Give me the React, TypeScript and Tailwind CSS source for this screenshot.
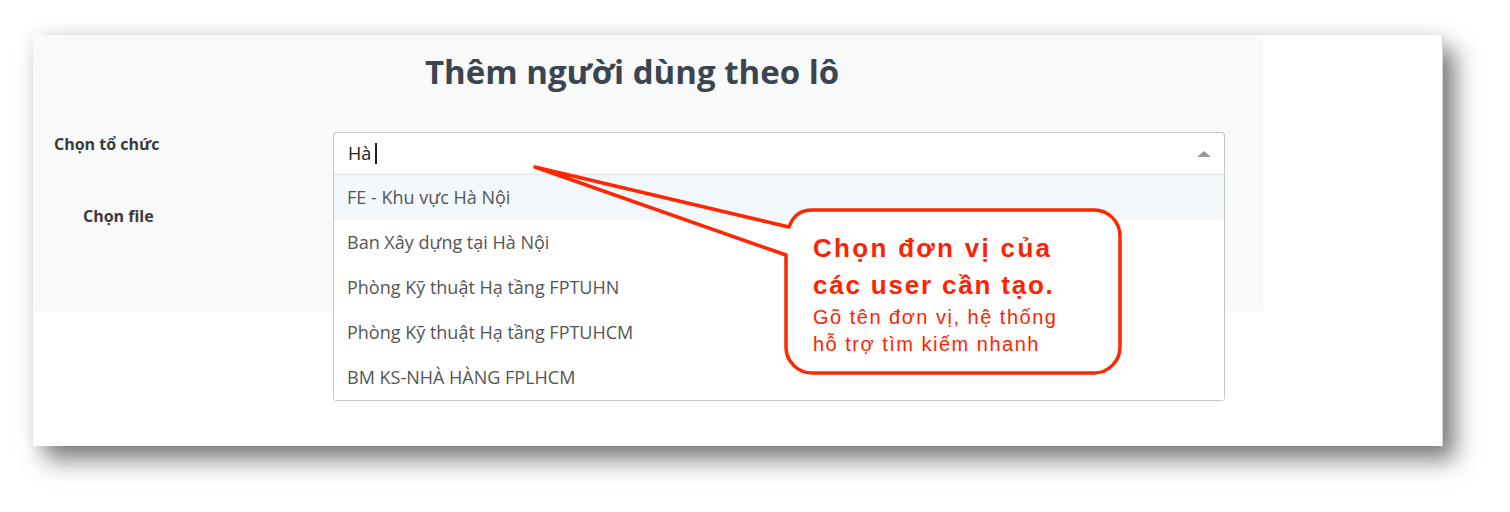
import React from "react";

const items = [
  "FE - Khu vực Hà Nội",
  "Ban Xây dựng tại Hà Nội",
  "Phòng Kỹ thuật Hạ tầng FPTUHN",
  "Phòng Kỹ thuật Hạ tầng FPTUHCM",
  "BM KS-NHÀ HÀNG FPLHCM",
];

export default function App() {
  return (
    <div className="relative w-[1510px] h-[512px] bg-white pt-[35px] pl-[33px] overflow-hidden font-['Open_Sans',sans-serif]">
      <div className="w-[1410px] h-[411px] bg-white shadow-[12px_14px_22px_rgba(0,0,0,0.5),0_-2px_16px_rgba(0,0,0,0.08)] border-r border-[#d8d8d8]">
        <div className="w-[1230px] h-[276px] bg-[#f8f9f9]">
          <div className="pt-[17px] pl-[392px] h-[58px]">
            <h1 className="text-[33px] leading-[40px] font-bold text-[#3b4550]">Thêm người dùng theo lô</h1>
          </div>
          <div className="mt-[39px] flex">
            <div className="w-[300px] pl-[21px]">
              <span className="text-[16px] leading-[20px] font-bold text-[#3a3a3a]">Chọn tổ chức</span>
            </div>
            <div className="relative w-[892px]">
              <div className="h-[43px] bg-white border-t border-x border-[#c6c6c6] rounded-t-[4px] border-b border-b-[#e4e4e4] flex items-center justify-between pl-[14px] pr-[13px]">
                <div className="flex items-center">
                  <span className="text-[18px] text-[#222]">Hà</span>
                  <span className="ml-[4px] w-[2px] h-[21px] bg-[#222]"></span>
                </div>
                <span className="w-0 h-0 border-x-[7px] border-x-transparent border-b-[6px] border-b-[#9a9a9a]"></span>
              </div>
              <div className="absolute left-0 right-0 top-full bg-white border-x border-b border-[#c6c6c6] rounded-b-[4px] z-10">
                {items.map((t, i) => (
                  <div
                    key={t}
                    className={
                      "h-[45px] flex items-center pl-[13px] text-[18px] text-[#555] " +
                      (i === 0 ? "bg-[#f3f8fc]" : "bg-white")
                    }
                  >
                    {t}
                  </div>
                ))}
              </div>
            </div>
          </div>
          <div className="mt-[29px] pl-[50px]">
            <span className="text-[16px] leading-[20px] font-bold text-[#3a3a3a]">Chọn file</span>
          </div>
        </div>
      </div>

      <svg className="absolute left-0 top-0 z-20 pointer-events-none" width="1510" height="512" viewBox="0 0 1510 512">
        <path
          d="M812 210 H1094 A26 26 0 0 1 1120 236 V347 A26 26 0 0 1 1094 373 H812 A26 26 0 0 1 786 347 V236 A26 26 0 0 1 812 210 Z"
          fill="#ffffff"
        />
        <path
          d="M812 210 H1094 A26 26 0 0 1 1120 236 V347 A26 26 0 0 1 1094 373 H812 A26 26 0 0 1 786 347 V255 L535 167 L789 227 Q795 210 812 210 Z"
          fill="none"
          stroke="#ff2600"
          strokeWidth="3.5"
          strokeLinejoin="round"
        />
      </svg>
      <div className="absolute left-[813px] top-[230px] z-30 font-['Liberation_Sans',Arial,sans-serif] text-[#ff2200]">
        <div className="text-[26px] leading-[37px] font-bold tracking-[2.3px] whitespace-nowrap">Chọn đơn vị của</div>
        <div className="text-[26px] leading-[37px] font-bold tracking-[1.8px] whitespace-nowrap">các user cần tạo.</div>
        <div className="text-[20px] leading-[27px] tracking-[1.5px] whitespace-nowrap">Gõ tên đơn vị, hệ thống</div>
        <div className="text-[20px] leading-[27px] tracking-[1.5px] whitespace-nowrap">hỗ trợ tìm kiếm nhanh</div>
      </div>
    </div>
  );
}
